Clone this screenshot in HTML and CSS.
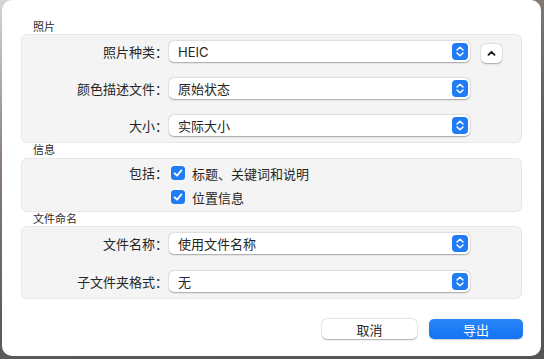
FILE: index.html
```html
<!DOCTYPE html>
<html lang="zh-CN">

<head>
    <meta charset="UTF-8">
    <meta name="viewport" content="width=device-width, initial-scale=1.0">
    <title>导出</title>
    <link rel="stylesheet" href="styles.css">
</head>

<body>
    <div class="dialog">
        <div class="section-title">照片</div>
        <div class="group">
            <div class="row">
                <div class="label">照片种类：</div>
                <div class="popup">
                    <span>HEIC</span>
                    <svg class="stepper" width="16" height="17" viewBox="0 0 16 17">
                        <rect width="16" height="17" rx="4" fill="#1f7cf4" />
                        <path d="M5 7 L8 4.2 L11 7 M5 10 L8 12.8 L11 10" fill="none" stroke="#fff" stroke-width="1.5" stroke-linecap="round" stroke-linejoin="round" />
                    </svg>
                </div>
                <div class="disclosure">
                    <svg width="21" height="19" viewBox="0 0 21 19">
                        <path d="M7.5 10.8 L10.5 7.8 L13.5 10.8" fill="none" stroke="#1c1c1c" stroke-width="1.9" stroke-linecap="round" stroke-linejoin="round" />
                    </svg>
                </div>
            </div>
            <div class="row">
                <div class="label">颜色描述文件：</div>
                <div class="popup">
                    <span>原始状态</span>
                    <svg class="stepper" width="16" height="17" viewBox="0 0 16 17">
                        <rect width="16" height="17" rx="4" fill="#1f7cf4" />
                        <path d="M5 7 L8 4.2 L11 7 M5 10 L8 12.8 L11 10" fill="none" stroke="#fff" stroke-width="1.5" stroke-linecap="round" stroke-linejoin="round" />
                    </svg>
                </div>
            </div>
            <div class="row">
                <div class="label">大小：</div>
                <div class="popup">
                    <span>实际大小</span>
                    <svg class="stepper" width="16" height="17" viewBox="0 0 16 17">
                        <rect width="16" height="17" rx="4" fill="#1f7cf4" />
                        <path d="M5 7 L8 4.2 L11 7 M5 10 L8 12.8 L11 10" fill="none" stroke="#fff" stroke-width="1.5" stroke-linecap="round" stroke-linejoin="round" />
                    </svg>
                </div>
            </div>
        </div>

        <div class="section-title">信息</div>
        <div class="group info">
            <div class="check-row">
                <div class="label">包括：</div>
                <svg class="check" width="14" height="14" viewBox="0 0 14 14">
                    <rect width="14" height="14" rx="3.5" fill="#1f7cf4" />
                    <path d="M3.6 7.3 L6 9.7 L10.4 4.4" fill="none" stroke="#fff" stroke-width="1.8" stroke-linecap="round" stroke-linejoin="round" />
                </svg>
                <span>标题、关键词和说明</span>
            </div>
            <div class="check-row">
                <div class="label"></div>
                <svg class="check" width="14" height="14" viewBox="0 0 14 14">
                    <rect width="14" height="14" rx="3.5" fill="#1f7cf4" />
                    <path d="M3.6 7.3 L6 9.7 L10.4 4.4" fill="none" stroke="#fff" stroke-width="1.8" stroke-linecap="round" stroke-linejoin="round" />
                </svg>
                <span>位置信息</span>
            </div>
        </div>

        <div class="section-title">文件命名</div>
        <div class="group naming">
            <div class="row">
                <div class="label">文件名称：</div>
                <div class="popup">
                    <span>使用文件名称</span>
                    <svg class="stepper" width="16" height="17" viewBox="0 0 16 17">
                        <rect width="16" height="17" rx="4" fill="#1f7cf4" />
                        <path d="M5 7 L8 4.2 L11 7 M5 10 L8 12.8 L11 10" fill="none" stroke="#fff" stroke-width="1.5" stroke-linecap="round" stroke-linejoin="round" />
                    </svg>
                </div>
            </div>
            <div class="row">
                <div class="label">子文件夹格式：</div>
                <div class="popup">
                    <span>无</span>
                    <svg class="stepper" width="16" height="17" viewBox="0 0 16 17">
                        <rect width="16" height="17" rx="4" fill="#1f7cf4" />
                        <path d="M5 7 L8 4.2 L11 7 M5 10 L8 12.8 L11 10" fill="none" stroke="#fff" stroke-width="1.5" stroke-linecap="round" stroke-linejoin="round" />
                    </svg>
                </div>
            </div>
        </div>

        <div class="buttons">
            <button class="btn">取消</button>
            <button class="btn primary">导出</button>
        </div>
    </div>
</body>

</html>
```
FILE: styles.css
```css
* {
    margin: 0;
    padding: 0;
    box-sizing: border-box;
}

body {
    width: 544px;
    height: 359px;
    overflow: hidden;
    background: linear-gradient(160deg, #d6d6d6 0, #8a7c76 30%, #5a5a5a 60%, #555 100%);
    padding: 0 3px 3px 2px;
    font-family: "Inter", "Noto Sans CJK SC", sans-serif;
    color: #262626;
}

.dialog {
    width: 539px;
    height: 356px;
    background: #fff;
    border-radius: 10px;
    padding: 20px 19px 0 19px;
    display: flex;
    flex-direction: column;
}

.section-title {
    font-size: 11px;
    line-height: 15px;
    padding-left: 12px;
    color: #2b2b2b;
}

.section-title:first-child {
    line-height: 14px;
}

.group {
    background: #f4f4f4;
    border: 1px solid #e7e7e7;
    border-radius: 6px;
    padding: 6px 0 6px 0;
    display: flex;
    flex-direction: column;
    gap: 16px;
}

.group.info {
    padding: 5px 0 5px 0;
    gap: 6px;
}

.group.naming {
    margin-top: -1px;
    gap: 17px;
}

.row {
    display: flex;
    align-items: center;
    height: 21px;
}

.label {
    width: 147px;
    flex-shrink: 0;
    text-align: right;
    font-size: 13px;
    line-height: 18px;
    padding-right: 1px;
}

.popup {
    width: 301px;
    height: 21px;
    background: #fff;
    border-radius: 5px;
    box-shadow: 0 0.5px 1.5px rgba(0, 0, 0, 0.3), 0 0 0 0.5px rgba(0, 0, 0, 0.06);
    display: flex;
    align-items: center;
    justify-content: space-between;
    padding: 0 2px 0 9px;
    font-size: 13px;
}

.stepper {
    display: block;
}

.disclosure {
    width: 21px;
    height: 19px;
    margin-left: 11px;
    margin-top: 3px;
    background: #fff;
    border-radius: 5px;
    box-shadow: 0 0.5px 1.5px rgba(0, 0, 0, 0.3), 0 0 0 0.5px rgba(0, 0, 0, 0.06);
}

.disclosure svg {
    display: block;
}

.check-row {
    display: flex;
    align-items: center;
    height: 18px;
    font-size: 13px;
}

.check {
    display: block;
    margin-left: 2px;
    margin-right: 7px;
}

.buttons {
    display: flex;
    justify-content: flex-end;
    gap: 12px;
    margin-top: 20px;
    margin-right: -1px;
}

.btn {
    width: 95px;
    height: 20px;
    border: none;
    outline: none;
    border-radius: 5px;
    background: #fff;
    box-shadow: 0 0.5px 1.5px rgba(0, 0, 0, 0.3), 0 0 0 0.5px rgba(0, 0, 0, 0.08);
    font-family: "Inter", "Noto Sans CJK SC", sans-serif;
    font-size: 13px;
    color: #262626;
}

.btn.primary {
    width: 94px;
    background: linear-gradient(#2a86f7, #1373f2);
    color: #fff;
    box-shadow: 0 0.5px 1px rgba(0, 0, 0, 0.2);
}
```
